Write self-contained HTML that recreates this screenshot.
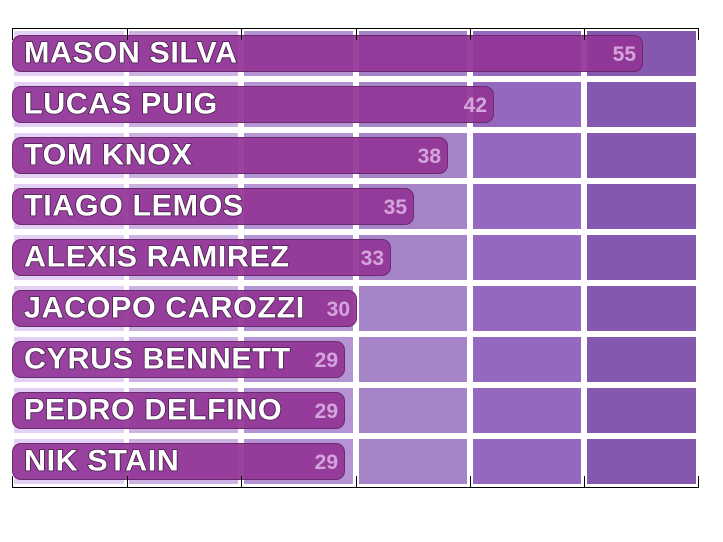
<!DOCTYPE html>
<html><head><meta charset="utf-8"><style>
body{margin:0;width:723px;height:542px;background:#fff;position:relative;overflow:hidden;font-family:"Liberation Sans",sans-serif}
.c{position:absolute;height:45px}
.b{position:absolute;left:12px;height:37px;background:rgba(146,52,150,0.92);border:1px solid #6a2a70;border-radius:9px;box-sizing:border-box}
.n{position:absolute;left:24px;color:#fff;font-weight:bold;font-size:27px;letter-spacing:0.5px;-webkit-text-stroke:1.5px #4a1f50;paint-order:stroke fill;line-height:37px;white-space:nowrap;transform:scale(1.13,1.08);transform-origin:left center}
.v{position:absolute;right:6px;top:0;line-height:37px;color:#d4a4dc;font-weight:bold;font-size:21px}
.l{position:absolute;background:#000}
</style></head><body>
<div id="g"></div>
<script>
var cols=[[14,110,'#e3d0f4'],[129,109,'#cbb2e3'],[244,109,'#b594d4'],[359,108,'#a684c8'],[473,108,'#9468be'],[587,109,'#8358ae']];
var data=[["MASON SILVA",55],["LUCAS PUIG",42],["TOM KNOX",38],["TIAGO LEMOS",35],["ALEXIS RAMIREZ",33],["JACOPO CAROZZI",30],["CYRUS BENNETT",29],["PEDRO DELFINO",29],["NIK STAIN",29]];
var h='';
for(var r=0;r<9;r++){var y=31+r*51;
for(var c=0;c<6;c++){h+='<div class="c" style="left:'+cols[c][0]+'px;top:'+y+'px;width:'+cols[c][1]+'px;background:'+cols[c][2]+'"></div>';}
}
for(var r=0;r<9;r++){var y=35+r*51;var w=Math.round(data[r][1]*11.45)+1;
h+='<div class="b" style="top:'+y+'px;width:'+w+'px"><span class="v">'+data[r][1]+'</span></div>';
h+='<div class="n" style="top:'+y+'px">'+data[r][0]+'</div>';}
var xs=[12,127,241,356,470,584,698];
h+='<div class="l" style="left:12px;top:28px;width:687px;height:1px"></div>';
h+='<div class="l" style="left:12px;top:487px;width:687px;height:1px"></div>';
xs.forEach(function(x){h+='<div class="l" style="left:'+x+'px;top:28px;width:1px;height:12px"></div>';h+='<div class="l" style="left:'+x+'px;top:476px;width:1px;height:12px"></div>';});
document.getElementById('g').innerHTML=h;
</script>
</body></html>
